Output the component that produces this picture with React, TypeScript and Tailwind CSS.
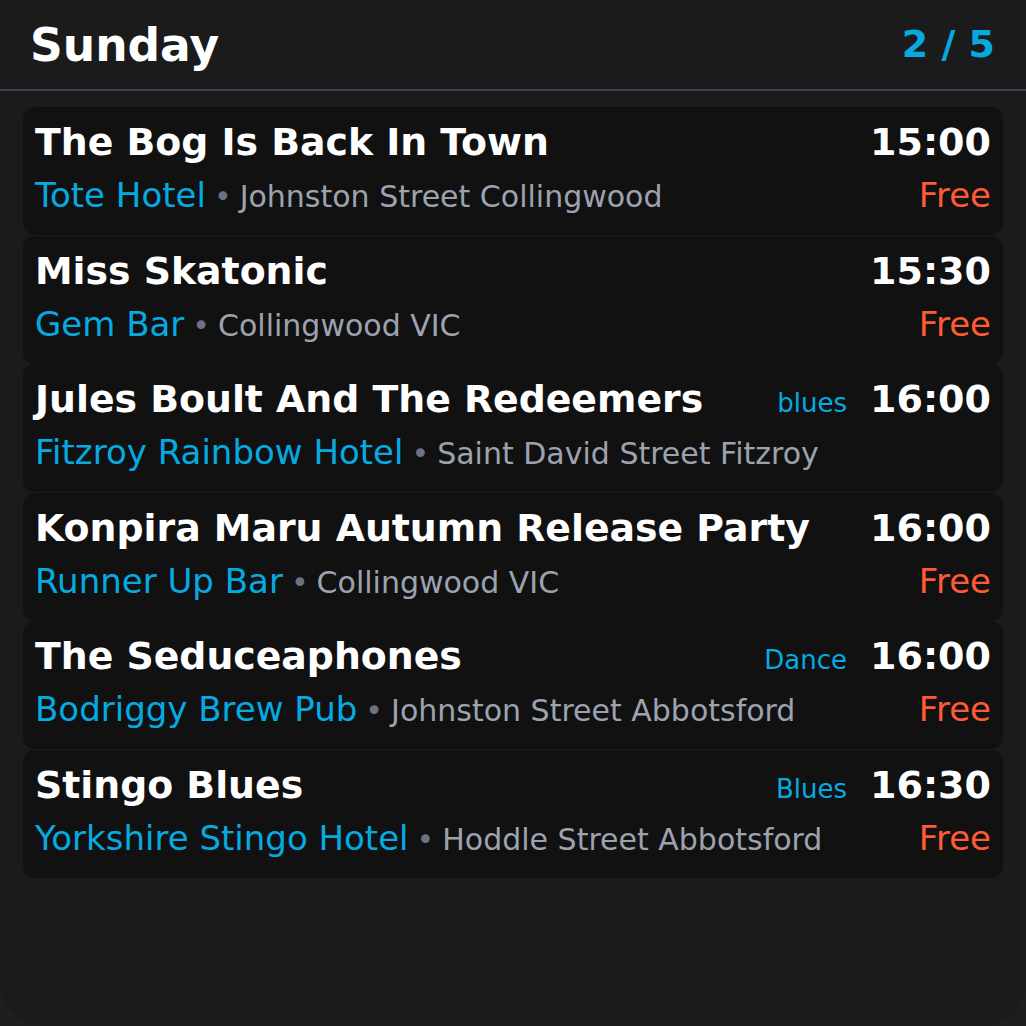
import React from "react";

type Ev = {
  title: string;
  venue: string;
  address: string;
  time: string;
  tag?: string;
  price?: string;
};

const events: Ev[] = [
  { title: "The Bog Is Back In Town", venue: "Tote Hotel", address: "Johnston Street Collingwood", time: "15:00", price: "Free" },
  { title: "Miss Skatonic", venue: "Gem Bar", address: "Collingwood VIC", time: "15:30", price: "Free" },
  { title: "Jules Boult And The Redeemers", venue: "Fitzroy Rainbow Hotel", address: "Saint David Street Fitzroy", time: "16:00", tag: "blues" },
  { title: "Konpira Maru Autumn Release Party", venue: "Runner Up Bar", address: "Collingwood VIC", time: "16:00", price: "Free" },
  { title: "The Seduceaphones", venue: "Bodriggy Brew Pub", address: "Johnston Street Abbotsford", time: "16:00", tag: "Dance", price: "Free" },
  { title: "Stingo Blues", venue: "Yorkshire Stingo Hotel", address: "Hoddle Street Abbotsford", time: "16:30", tag: "Blues", price: "Free" },
];

export default function App() {
  return (
    <div
      className="w-[1026px] h-[1026px] bg-[#1e1e1e] overflow-hidden"
      style={{ fontFamily: '"DejaVu Sans", "Liberation Sans", sans-serif' }}
    >
      <div className="w-full h-full bg-[#1b1b1b] rounded-b-[44px] flex flex-col">
        <div className="h-[89px] flex items-center justify-between pl-[30px] pr-[31px] border-b-2 border-[#374151] box-content">
          <div className="text-[45.5px] font-bold text-white leading-[52px] mt-[2px]">Sunday</div>
          <div className="text-[38px] font-bold text-[#06aae0] leading-[43px]">2 / 5</div>
        </div>
        <div className="flex flex-col gap-[0.6px] px-[23px] pt-[16px]">
          {events.map((e, i) => (
            <div key={i} className="bg-[#111111] rounded-[12px] h-[128px] px-[12px] pt-[13px]">
              <div className="flex items-baseline h-[44px] leading-[44px]">
                <div className="flex-1 text-[37.8px] font-bold text-white whitespace-nowrap">{e.title}</div>
                {e.tag && (
                  <div className="text-[26px] text-[#06aae0] mr-[23px]">{e.tag}</div>
                )}
                <div className="text-[38px] font-bold text-white">{e.time}</div>
              </div>
              <div className="flex items-baseline mt-[12px] h-[38px] leading-[38px]">
                <div className="flex-1 flex items-baseline whitespace-nowrap">
                  <span className="text-[34px] text-[#06aae0]">{e.venue}</span>
                  <span className="text-[30px] text-[#6b7280] mx-[8px]">•</span>
                  <span className="text-[30px] text-[#9ca3af]">{e.address}</span>
                </div>
                {e.price && <div className="text-[34px] text-[#ff5a36]">{e.price}</div>}
              </div>
            </div>
          ))}
        </div>
      </div>
    </div>
  );
}
